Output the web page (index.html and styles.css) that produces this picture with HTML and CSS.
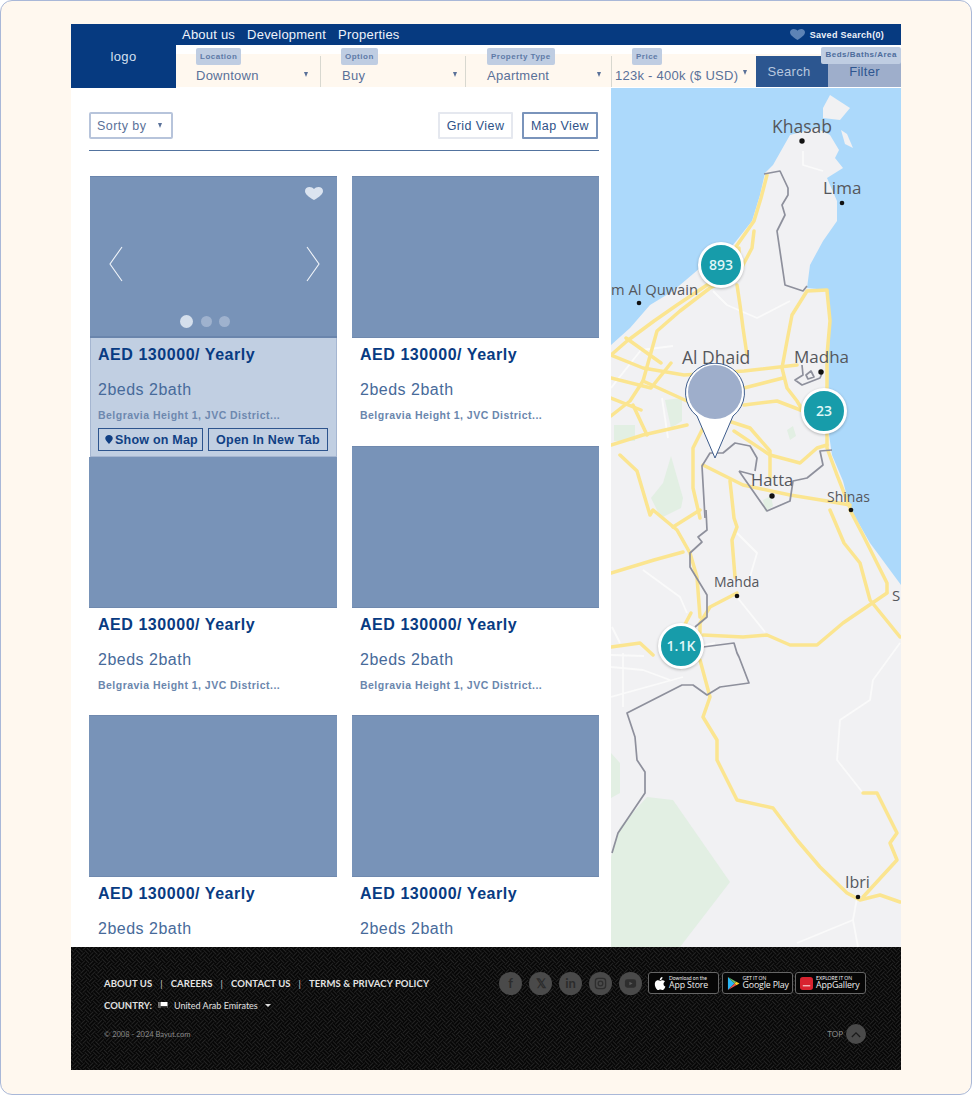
FILE: index.html
```html
<!DOCTYPE html>
<html lang="en">
<head>
<meta charset="utf-8">
<title>Property search</title>
<link rel="stylesheet" href="styles.css">
</head>
<body>
<div class="frame">
  <div class="app">
    <header class="header">
      <div class="logo">logo</div>
      <div class="header-main">
        <div class="topbar">
          <nav class="topnav"><a>About us</a><a>Development</a><a>Properties</a></nav>
          <div class="saved">
            <svg class="saved-heart" viewBox="0 0 24 20" preserveAspectRatio="none"><path d="M12 20C5 15 0 11 0 6c0-3.500 2.700-6 6-6 2.500 0 4.700 1.300 6 3 1.300-1.700 3.500-3 6-3 3.300 0 6 2.500 6 6 0 5-5 9-12 14z"/></svg>
            <span>Saved Search(0)</span>
          </div>
        </div>
        <div class="filters">
          <div class="field f-loc"><span class="tag">Location</span><div class="val"><span>Downtown</span><i class="caret"></i></div></div>
          <div class="field f-opt"><span class="tag">Option</span><div class="val"><span>Buy</span><i class="caret"></i></div></div>
          <div class="field f-type"><span class="tag">Property Type</span><div class="val"><span>Apartment</span><i class="caret"></i></div></div>
          <div class="field f-price"><span class="tag">Price</span><div class="val"><span>123k - 400k ($ USD)</span><i class="caret"></i></div></div>
          <div class="actions">
            <button class="btn-search">Search</button>
            <button class="btn-filter">Filter</button>
            <span class="tag tag-beds">Beds/Baths/Area</span>
          </div>
        </div>
      </div>
    </header>

    <div class="content">
      <section class="listing">
        <div class="toolbar">
          <div class="sort"><span>Sorty by</span><i class="caret"></i></div>
          <div class="views"><button class="view view-grid">Grid View</button><button class="view view-on">Map View</button></div>
        </div>
        <div class="grid">
          <article class="card card-active">
            <div class="photo">
              <svg class="fav" viewBox="0 0 24 20" preserveAspectRatio="none"><path d="M12 20C5 15 0 11 0 6c0-3.500 2.700-6 6-6 2.500 0 4.700 1.300 6 3 1.300-1.700 3.500-3 6-3 3.300 0 6 2.500 6 6 0 5-5 9-12 14z"/></svg>
              <svg class="arrow arrow-l" viewBox="0 0 14 36"><path d="M13 1L1 18l12 17"/></svg>
              <svg class="arrow arrow-r" viewBox="0 0 14 36"><path d="M1 1l12 17L1 35"/></svg>
              <div class="dots"><i class="dot dot-on"></i><i class="dot"></i><i class="dot"></i></div>
            </div>
            <div class="info">
              <h3 class="price">AED 130000/ Yearly</h3>
              <p class="beds">2beds 2bath</p>
              <p class="addr">Belgravia Height 1, JVC District...</p>
              <div class="card-btns">
                <button class="cbtn cbtn-map"><svg class="mini-pin" viewBox="0 0 10 12"><path d="M5 12C2 8.500 0 6.500 0 4.300 0 1.800 2.200 0 5 0s5 1.800 5 4.300C10 6.500 8 8.500 5 12z"/></svg>Show on Map</button>
                <button class="cbtn cbtn-tab">Open In New Tab</button>
              </div>
            </div>
          </article>
          <article class="card">
            <div class="photo"></div>
            <div class="info"><h3 class="price">AED 130000/ Yearly</h3><p class="beds">2beds 2bath</p><p class="addr">Belgravia Height 1, JVC District...</p></div>
          </article>
          <article class="card">
            <div class="photo"></div>
            <div class="info"><h3 class="price">AED 130000/ Yearly</h3><p class="beds">2beds 2bath</p><p class="addr">Belgravia Height 1, JVC District...</p></div>
          </article>
          <article class="card">
            <div class="photo"></div>
            <div class="info"><h3 class="price">AED 130000/ Yearly</h3><p class="beds">2beds 2bath</p><p class="addr">Belgravia Height 1, JVC District...</p></div>
          </article>
          <article class="card">
            <div class="photo"></div>
            <div class="info"><h3 class="price">AED 130000/ Yearly</h3><p class="beds">2beds 2bath</p></div>
          </article>
          <article class="card">
            <div class="photo"></div>
            <div class="info"><h3 class="price">AED 130000/ Yearly</h3><p class="beds">2beds 2bath</p></div>
          </article>
        </div>
      </section>

      <section class="map">
        <svg class="map-svg" viewBox="0 0 290 859" preserveAspectRatio="none">
          <rect width="290" height="859" fill="#acd9fb"/>
          <g fill="#f1f1f3">
            <path d="M179 47L162 77L154 85L149 107L141 133L122 157L89 180L62 203L39 217L19 240L0 257V859H290V497L259 455L239 420L232 393L221 367L216 333L217 300L219 233L216 202L196 200L199 177L212 153L226 133L226 113L216 90L232 80L224 70L228 62L219 47L205 40Z"/>
            <path d="M212 20L219 7L239 20L229 32L212 30Z"/>
            <path d="M230 42L236 46L242 60L234 56Z"/>
          </g>
          <g fill="#e2efe3">
            <path d="M3 337H24V353H3Z"/>
            <path d="M54 312L71 310L71 333L60 340Z"/>
            <path d="M60 368L72 410L70 420L50 430L40 410L52 395Z"/>
            <path d="M176 342L182 338L185 348L179 352Z"/>
            <path d="M152 412L160 408L162 418L154 424Z"/>
            <path d="M0 665L9 675L9 705L0 710Z"/>
            <path d="M36 709L62 712L119 794L69 859H0V769L9 739Z"/>
          </g>
          <g fill="none" stroke="#fafafa" stroke-width="1.800" stroke-linejoin="round">
            <path d="M102 203L116 217L146 230L179 213"/>
            <path d="M51 310L57 350M192 63V77L212 83M0 300L30 262L62 258"/>
            <path d="M32 482L69 509L76 525M126 509L154 544M126 445L146 465L136 499"/>
            <path d="M1 539L9 555M12 565V619M0 579L32 582L59 592M0 609L72 589M0 567L33 568"/>
            <path d="M289 555L262 592L259 612L229 632L226 672L252 705M246 810L242 832L186 855M242 832L247 859"/>
            <path d="M82 560L104 555M70 582L90 574"/>
          </g>
          <g fill="none" stroke="#fbe590" stroke-width="3.500" stroke-linejoin="round" stroke-linecap="round">
            <path d="M156 87L150 110L143 133L136 143L124 160M143 143L141 160L132 177L126 187M128 160V172"/>
            <path d="M96 197L66 217L43 233L16 253L0 267M99 200L69 223L46 243L32 293L19 313L0 328M115 190L96 197M126 187L99 200"/>
            <path d="M126 197L129 217L132 240L136 267"/>
            <path d="M216 202L196 203L181 227L176 253L171 280L176 300L186 313L192 323"/>
            <path d="M216 203L219 233L216 267L216 300L216 360L226 387L239 420"/>
            <path d="M239 422L253 449L276 495L276 504M219 422L233 455L249 475L259 512L289 549"/>
            <path d="M0 267L32 280L73 287L133 283L186 277"/>
            <path d="M32 293L76 313L99 327L139 340L159 363L159 390"/>
            <path d="M133 317L166 313L192 323M133 300L172 290"/>
            <path d="M123 343L159 367L189 375L206 360L216 357"/>
            <path d="M0 357L32 347L76 337M92 340L82 360L82 400L89 430"/>
            <path d="M9 367L26 383L39 427L42 422L66 442L79 465L86 489L89 529M22 317L36 347"/>
            <path d="M0 290L40 300L60 275M0 310L30 322M15 250L50 275"/>
            <path d="M92 377L132 397L179 407L216 413L239 417"/>
            <path d="M119 393L123 430L126 439L121 452L124 489"/>
            <path d="M0 485L43 472L72 464M62 439L89 422"/>
            <path d="M126 505L99 519L89 535L89 545M80 525L72 540"/>
            <path d="M0 559L29 555L42 567"/>
            <path d="M92 547L132 549L156 547L179 557L206 557L232 535L276 505"/>
            <path d="M89 572L99 609L92 629L106 652L106 672L126 712L162 720L186 752L209 779L236 805L249 812L269 807L289 814"/>
            <path d="M252 809L286 772L279 755L286 745L266 705L252 705"/>
          </g>
          <g fill="none" stroke="#8e909c" stroke-width="1.700" stroke-linejoin="round">
            <path d="M153 86L169 83L177 100L177 107L171 117L174 127L166 143L174 197L192 203L196 198"/>
            <path d="M94 430L91 378L99 365L112 365L124 355L139 358L146 370L144 383"/>
            <path d="M128 383L156 423L179 413L182 393L196 390L212 377L209 363L221 362M128 383L143 387"/>
            <path d="M191 277L192 287L184 292L191 297L209 290L212 283M195 287L200 283L203 289L197 291Z"/>
            <path d="M95 422L96 442L87 449L91 454L79 465L79 479L96 507L96 529L84 539"/>
            <path d="M92 559L123 555L126 565L128 569L138 595L109 599L96 607L82 597L71 597L16 625L24 649L26 672L34 684L34 705L7 745L1 765"/>
          </g>
          <g fill="#111">
            <circle cx="191" cy="53" r="2.700"/><circle cx="231" cy="115" r="2.300"/><circle cx="28" cy="215" r="2.300"/><circle cx="210" cy="284" r="2.700"/><circle cx="161" cy="408" r="2.700"/><circle cx="240" cy="422" r="2.300"/><circle cx="126" cy="508" r="2.300"/><circle cx="247" cy="809" r="2.300"/>
          </g>
        </svg>
        <span class="place p-khasab">Khasab</span>
        <span class="place p-lima">Lima</span>
        <span class="place p-quwain">m Al Quwain</span>
        <span class="place p-dhaid">Al Dhaid</span>
        <span class="place p-madha">Madha</span>
        <span class="place p-hatta">Hatta</span>
        <span class="place p-shinas">Shinas</span>
        <span class="place p-mahda">Mahda</span>
        <span class="place p-s">S</span>
        <span class="place p-ibri">Ibri</span>
        <div class="cluster c-893">893</div>
        <div class="cluster c-23">23</div>
        <div class="cluster c-11k">1.1K</div>
        <svg class="pin" viewBox="0 0 60 97"><path d="M30 95L12 53A29.500 29.500 0 1 1 48 53Z" fill="#fff" stroke="#3d5c8c" stroke-width="1"/><circle cx="30" cy="29" r="27" fill="#9eaecb"/></svg>
      </section>
    </div>

    <footer class="footer">
      <svg class="foot-bg" width="100%" height="100%"><defs><pattern id="weave" width="12" height="12" patternUnits="userSpaceOnUse" patternTransform="rotate(45)"><rect width="12" height="12" fill="#070707"/><g stroke="#242424" stroke-width="1"><path d="M0 1.500h6M0 4.500h6M6 7.500h6M6 10.500h6M1.500 6v6M4.500 6v6M7.500 0v6M10.500 0v6"/></g></pattern></defs><rect width="100%" height="100%" fill="url(#weave)"/></svg>
      <div class="foot-left">
        <div class="foot-links"><a>ABOUT US</a><i>|</i><a>CAREERS</a><i>|</i><a>CONTACT US</a><i>|</i><a>TERMS &amp; PRIVACY POLICY</a></div>
        <div class="foot-country"><b>COUNTRY:</b><svg class="flag" viewBox="0 0 12 8"><rect width="12" height="8" fill="#fff"/><rect y="5.500" width="12" height="2.500" fill="#222"/><rect width="3" height="8" fill="#666"/></svg><span>United Arab Emirates</span><i class="foot-caret"></i></div>
        <div class="foot-copy">© 2008 - 2024 Bayut.com</div>
      </div>
      <div class="foot-right">
        <div class="foot-icons">
          <div class="socials">
            <span class="soc">f</span>
            <span class="soc">𝕏</span>
            <span class="soc">in</span>
            <span class="soc"><svg class="soc-svg" viewBox="0 0 14 14"><rect x="1.500" y="1.500" width="11" height="11" rx="3" fill="none" stroke="#2e2e2e" stroke-width="1.400"/><circle cx="7" cy="7" r="2.500" fill="none" stroke="#2e2e2e" stroke-width="1.400"/></svg></span>
            <span class="soc"><svg class="soc-svg" viewBox="0 0 14 14"><rect x="1" y="2.500" width="12" height="9" rx="2.500" fill="#2e2e2e"/><path d="M5.800 5v4l3.400-2z" fill="#5a5a5a"/></svg></span>
          </div>
          <div class="stores">
            <span class="store">
              <svg class="st-ico" viewBox="0 0 14 16"><path fill="#fff" d="M11.300 8.500c0-1.700 1.400-2.500 1.500-2.600-.8-1.200-2.100-1.400-2.500-1.400-1.100-.1-2.100.6-2.600.6-.6 0-1.400-.6-2.300-.6-1.200 0-2.300.7-2.900 1.700-1.200 2.200-.3 5.400.9 7.100.6.800 1.300 1.800 2.200 1.700.9 0 1.200-.6 2.300-.6s1.400.6 2.300.6c1 0 1.600-.8 2.200-1.700.7-1 1-2 1-2-.1 0-2.100-.8-2.100-2.800zM9.500 3.300c.5-.6.800-1.400.7-2.300-.7 0-1.600.5-2.100 1.100-.5.500-.9 1.400-.8 2.200.8.100 1.700-.4 2.200-1z"/></svg>
              <span class="st-txt"><small>Download on the</small><em>App Store</em></span>
            </span>
            <span class="store">
              <svg class="st-ico" viewBox="0 0 14 16"><path fill="#29b6f6" d="M1 1l7 7-7 7z"/><path fill="#66bb6a" d="M1 1l9 5-2 2z"/><path fill="#ef5350" d="M1 15l9-5-2-2z"/><path fill="#ffca28" d="M10 6l3.500 2-3.500 2-2-2z"/></svg>
              <span class="st-txt"><small>GET IT ON</small><em>Google Play</em></span>
            </span>
            <span class="store">
              <svg class="st-ico st-hw" viewBox="0 0 14 14"><rect width="14" height="14" rx="3" fill="#d8232f"/><rect x="3" y="9" width="8" height="1" fill="#fff"/></svg>
              <span class="st-txt"><small>EXPLORE IT ON</small><em>AppGallery</em></span>
            </span>
          </div>
        </div>
        <div class="foot-top"><span>TOP</span><span class="top-btn"><svg class="top-ico" viewBox="0 0 12 8"><path d="M1 7l5-5 5 5" fill="none" stroke="#1a1a1a" stroke-width="1.500"/></svg></span></div>
      </div>
    </footer>
  </div>
</div>
</body>
</html>
```
FILE: styles.css
```css
* { box-sizing: border-box; }
html, body { margin: 0; padding: 0; background: #fff; }
body { font-family: "Liberation Sans", Arial, sans-serif; }
.frame {
  width: 972px; height: 1095px; background: #fff8ef;
  border: 1px solid #a9b8d8; border-radius: 12px;
  padding: 23px 70px 0;
}
.app { width: 830px; background: #fff; }
button { font-family: inherit; cursor: pointer; }

.header { display: flex; height: 64px; background: #063a80; }
.logo { width: 105px; padding-top: 25px; text-align: center; color: #d5e0f0; font-size: 13px; letter-spacing: .4px; }
.header-main { flex: 1; min-width: 0; display: flex; flex-direction: column; }
.topbar { height: 21px; display: flex; justify-content: space-between; align-items: center; padding: 0 17px 0 6px; }
.topnav { display: flex; gap: 12px; color: #eef3fb; font-size: 13px; letter-spacing: .22px; }
.saved { display: flex; align-items: center; gap: 5px; color: #eef3fb; font-size: 9px; font-weight: 700; letter-spacing: .28px; }
.saved-heart { width: 15px; height: 11px; fill: #5d83b5; }
.filters { height: 43px; display: flex; background: linear-gradient(#fff 0, #fff 9px, #fff8ef 9px, #fff8ef 42px, #fff 42px); position: relative; }
.field { position: relative; padding: 3px 8px 0 20px; display: flex; flex-direction: column; align-items: flex-start; }
.field + .field::before { content: ""; position: absolute; left: 0; top: 11px; bottom: 1px; width: 1px; background: #d8d8d0; }
.f-loc { width: 144px; padding-right: 12px; }
.f-opt { width: 145px; padding-left: 21px; }
.f-opt .val { padding-left: 1px; }
.f-type { width: 146px; padding-left: 22px; padding-right: 10px; }
.f-price { width: 145px; padding: 3px 9px 0 4px; }
.f-price .tag { margin-left: 17px; }
.tag { display: inline-block; height: 17px; padding: 0 4px; border-radius: 2px; background: #bfcde2; color: #5e7aa6; font-size: 8px; font-weight: 700; line-height: 17px; letter-spacing: .5px; white-space: nowrap; }
.val { width: 100%; display: flex; justify-content: space-between; align-items: center; margin-top: 3px; color: #5a7199; font-size: 13px; letter-spacing: .25px; white-space: nowrap; }
.caret { width: 0; height: 0; border-left: 2.500px solid transparent; border-right: 2.500px solid transparent; border-top: 5px solid #5a7199; margin-bottom: 3px; }
.f-price .caret { margin-bottom: 6px; }
.actions { position: relative; flex: 1; display: flex; align-items: flex-end; padding-bottom: 1px; }
.actions button { border: 0; height: 31px; font-size: 13px; letter-spacing: .3px; padding: 0 0 1px; }
.actions .btn-search { width: 72px; background: #2c5690; color: #b8c8df; padding: 0 6px 1px 0; }
.btn-filter { width: 73px; background: #9eaecb; color: #2e5690; }
.tag-beds { position: absolute; right: 0; top: 2px; height: 17px; line-height: 16px; padding: 0 4px; color: #4d6c9c; letter-spacing: .5px; }

.content { display: flex; height: 859px; overflow: hidden; }
.listing { width: 540px; height: 859px; padding: 0 12px 0 18px; overflow: hidden; background: #fff; }
.toolbar { height: 63px; padding-top: 24px; display: flex; justify-content: space-between; align-items: flex-start; border-bottom: 1px solid #52739f; }
.sort { width: 84px; height: 27px; border: 2px solid #b7c4db; border-radius: 2px; padding: 0 9px 0 6px; display: flex; justify-content: space-between; align-items: center; color: #5a7199; font-size: 12.500px; letter-spacing: .45px; }
.sort .caret { margin: 0; }
.views { display: flex; gap: 9px; padding-right: 1px; }
.view { height: 27px; padding: 0; background: #fff; border: 2px solid #e5e8ef; border-radius: 1px; color: #2e5288; font-size: 12.500px; letter-spacing: .42px; }
.view-grid { width: 75px; }
.view-on { width: 76px; border-color: #7a94bb; }
.grid { margin-top: 25px; display: grid; grid-template-columns: 248px 247px; column-gap: 15px; grid-auto-rows: 269.500px; }
.card { position: relative; height: 269.500px; }
.photo { position: relative; height: 162px; background: #7893b8; border-top: 1px solid #7089ae; border-bottom: 1px solid #6f89ae; }
.info { padding-left: 9px; }
.card:nth-child(even) .info { padding-left: 8px; }
.price { margin: 0; padding-top: 7px; color: #083b82; font-size: 16px; line-height: 20px; letter-spacing: .55px; font-weight: 700; }
.beds { margin: 15px 0 0; color: #476a9a; font-size: 16px; line-height: 20px; letter-spacing: .5px; }
.addr { margin: 8px 0 0; color: #6a86ad; font-size: 10.500px; line-height: 14px; font-weight: 700; letter-spacing: .47px; white-space: nowrap; }
.card-active { z-index: 1; height: 281px; width: 247px; margin-left: 1px; align-self: start; background: #c1cfe2; border-bottom: 1px solid #a5b6d1; border-left: 1px solid #a5b6d1; border-right: 1px solid #a5b6d1; box-shadow: -1px 0 0 #fff; }
.card-active .photo { border: 1px solid #6a85ac; border-width: 1px 0 2px; height: 162px; margin: 0 -1px; }
.card-active .info { padding-left: 7px; }
.card-active .addr { color: #6d88af; }
.fav { position: absolute; right: 14px; top: 10px; width: 18px; height: 13px; fill: #dbe4f0; }
.arrow { position: absolute; top: 69px; width: 14px; height: 36px; fill: none; stroke: #f1f5fa; stroke-width: 1.100; }
.arrow-l { left: 19px; }
.arrow-r { right: 17px; }
.dots { position: absolute; left: 90px; top: 138px; display: flex; align-items: center; gap: 7px; }
.dot { width: 11px; height: 11px; border-radius: 50%; background: #9fb2ce; }
.dot-on { width: 13px; height: 13px; background: #d5dfec; margin-right: 1px; }
.card-btns { display: flex; gap: 5px; margin-top: 6px; }
.cbtn { height: 23px; padding: 0; background: transparent; border: 1px solid #2d548d; color: #103f84; font-size: 12.500px; font-weight: 700; letter-spacing: .22px; white-space: nowrap; }
.cbtn-map { width: 105px; display: flex; align-items: center; padding-left: 6px; gap: 2px; }
.cbtn-tab { width: 120px; }
.mini-pin { width: 8px; height: 9px; fill: #103f84; }

.map { position: relative; flex: 1; min-width: 0; overflow: hidden; }
.map-svg { display: block; width: 100%; height: 100%; }
.place { position: absolute; color: #55575c; line-height: 20px; white-space: nowrap; font-family: "Open Sans", sans-serif; }
.p-khasab { left: 161px; top: 28px; font-size: 17.500px; }
.p-lima { left: 212px; top: 90px; font-size: 17px; }
.p-quwain { left: 0; top: 191px; font-size: 14.700px; }
.p-dhaid { left: 71px; top: 259px; font-size: 17.500px; }
.p-madha { left: 183px; top: 259px; font-size: 17px; }
.p-hatta { left: 140px; top: 382px; font-size: 16.500px; }
.p-shinas { left: 216px; top: 399px; font-size: 14px; }
.p-mahda { left: 103px; top: 484px; font-size: 14px; }
.p-s { left: 281px; top: 497px; font-size: 15px; }
.p-ibri { left: 234px; top: 784px; font-size: 16px; }
.cluster { position: absolute; width: 46px; height: 46px; border-radius: 50%; background: #179caa; border: 3px solid #fff; color: #dff6f7; font-size: 14px; font-weight: 600; line-height: 40px; text-align: center; font-family: "Open Sans", sans-serif; box-shadow: 0 1px 3px rgba(0,0,0,.25); }
.c-893 { left: 87px; top: 154px; }
.c-23 { left: 190px; top: 300px; }
.c-11k { left: 47px; top: 535px; }
.pin { position: absolute; left: 74px; top: 275px; width: 60px; height: 97px; }

.footer { position: relative; height: 123px; background-color: #070707; padding: 25px 35px 0 33px; display: flex; justify-content: space-between; font-family: Lato, sans-serif; overflow: hidden; }
.foot-bg { position: absolute; left: 0; top: 0; }
.foot-left, .foot-right { position: relative; }
.foot-links { display: flex; gap: 8px; color: #e4e4e4; font-size: 9.500px; font-weight: 700; letter-spacing: .08px; line-height: 23px; height: 23px; }
.foot-links i { font-style: normal; font-weight: 400; color: #ccc; }
.foot-country { display: flex; align-items: center; gap: 6px; color: #e0e0e0; font-size: 9px; height: 20px; }
.foot-country b { font-size: 9.500px; }
.flag { width: 10px; height: 6px; }
.foot-caret { width: 0; height: 0; border-left: 3px solid transparent; border-right: 3px solid transparent; border-top: 3px solid #ddd; margin-left: 1px; }
.foot-copy { margin-top: 15px; color: #8c8c8c; font-size: 7.500px; line-height: 10px; }
.foot-right { display: flex; flex-direction: column; align-items: flex-end; }
.foot-icons { display: flex; align-items: center; gap: 6px; height: 22px; }
.socials { display: flex; gap: 7px; }
.stores { display: flex; gap: 2.500px; }
.soc { width: 23px; height: 23px; border-radius: 50%; background: #4a4a4a; color: #2c2c2c; display: flex; align-items: center; justify-content: center; font-size: 13px; font-weight: 700; }
.soc-svg { width: 13px; height: 13px; }
.store { width: 71px; display: flex; align-items: center; gap: 3px; height: 22px; padding: 0 0 0 4px; border: 1px solid #666; border-radius: 3px; background: #060606; color: #eee; overflow: hidden; }
.st-ico { width: 13px; height: 15px; flex: none; }
.st-hw { height: 13px; }
.st-txt { display: flex; flex-direction: column; line-height: 1; }
.st-txt small { font-size: 5px; white-space: nowrap; }
.st-txt em { font-style: normal; font-size: 8.800px; letter-spacing: -.15px; font-family: "Open Sans", sans-serif; white-space: nowrap; }
.foot-top { display: flex; align-items: center; gap: 3px; margin-top: 30px; color: #8c8c8c; font-size: 8px; }
.top-btn { width: 20px; height: 20px; border-radius: 50%; background: #4a4a4a; display: flex; align-items: center; justify-content: center; }
.top-ico { width: 10px; height: 7px; }
```
